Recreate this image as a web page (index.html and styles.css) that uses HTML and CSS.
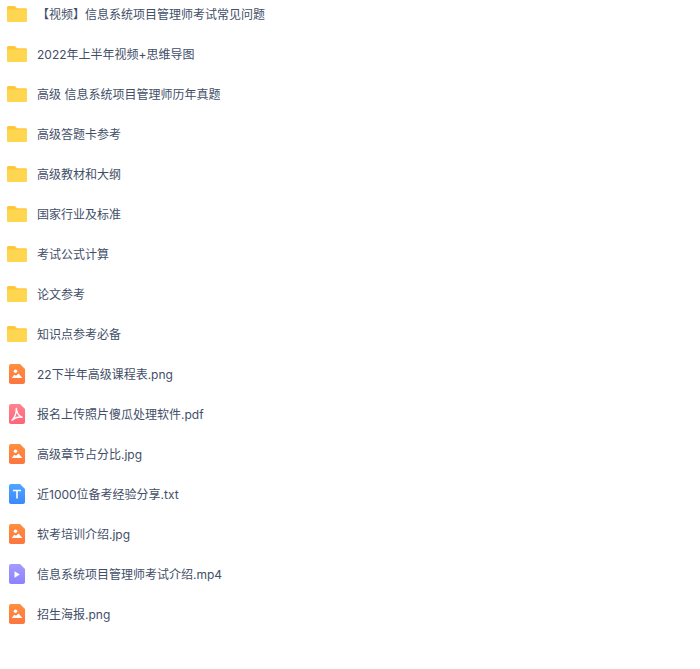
FILE: index.html
```html
<!DOCTYPE html>
<html lang="zh-CN">
<head>
<meta charset="utf-8">
<title>文件列表</title>
<link rel="stylesheet" href="styles.css">
</head>
<body>
<svg class="defs" width="0" height="0" aria-hidden="true">
  <defs>
    <linearGradient id="g-img" x1="0" y1="0" x2="0" y2="1"><stop offset="0" stop-color="#ff8f3f"/><stop offset="1" stop-color="#ff7540"/></linearGradient>
    <linearGradient id="g-pdf" x1="0" y1="0" x2="0" y2="1"><stop offset="0" stop-color="#ff8390"/><stop offset="1" stop-color="#ff6478"/></linearGradient>
    <linearGradient id="g-txt" x1="0" y1="0" x2="0" y2="1"><stop offset="0" stop-color="#4da6ff"/><stop offset="1" stop-color="#3d87ff"/></linearGradient>
    <linearGradient id="g-vid" x1="0" y1="0" x2="0" y2="1"><stop offset="0" stop-color="#a49bff"/><stop offset="1" stop-color="#8c82ff"/></linearGradient>
    <symbol id="folder" viewBox="0 0 20 16">
      <path d="M1.500 0H7c.8 0 1.400.3 2 1l1 1.200H18.500c.8 0 1.500.7 1.500 1.500V14.500c0 .8-.7 1.500-1.500 1.500H1.500C.7 16 0 15.300 0 14.500V1.500C0 .7.700 0 1.500 0z" fill="#ffc73a"/>
      <path d="M1.500 3.400H18.500c.8 0 1.500.6 1.500 1.400V14.500c0 .8-.7 1.500-1.500 1.500H1.500C.7 16 0 15.300 0 14.500V4.800c0-.8.700-1.400 1.500-1.400z" fill="#ffd64f"/>
    </symbol>
    <symbol id="img" viewBox="0 0 16 20">
      <path d="M2 0H11L16 5V18C16 19.100 15.100 20 14 20H2C.9 20 0 19.100 0 18V2C0 .9.900 0 2 0z" fill="url(#g-img)"/>
      <circle cx="6.500" cy="7.300" r="1.800" fill="#fff"/>
      <path d="M2.600 14 5.300 10.800 7 11.800 9.500 9.400 13.400 14z" fill="#fff"/>
    </symbol>
    <symbol id="pdf" viewBox="0 0 16 20">
      <path d="M2 0H11L16 5V18C16 19.100 15.100 20 14 20H2C.9 20 0 19.100 0 18V2C0 .9.900 0 2 0z" fill="url(#g-pdf)"/>
      <path d="M7.300 4.500C8 9 9.500 12 13 13.200 9.500 12.600 6 13.400 3 16.200 5.500 13.500 7.500 9 7.300 4.500z" fill="none" stroke="#fff" stroke-width="1.400" stroke-linejoin="round"/>
    </symbol>
    <symbol id="txt" viewBox="0 0 16 20">
      <path d="M2 0H11L16 5V18C16 19.100 15.100 20 14 20H2C.9 20 0 19.100 0 18V2C0 .9.900 0 2 0z" fill="url(#g-txt)"/>
      <path d="M4 5.800H12V7.300H8.800V14.500H7.200V7.300H4z" fill="#fff"/>
    </symbol>
    <symbol id="vid" viewBox="0 0 16 20">
      <path d="M2 0H11L16 5V18C16 19.100 15.100 20 14 20H2C.9 20 0 19.100 0 18V2C0 .9.900 0 2 0z" fill="url(#g-vid)"/>
      <path d="M5.500 7.200 10.800 10.500 5.500 13.800z" fill="#fff"/>
    </symbol>
  </defs>
</svg>
<ul class="list">
  <li class="row"><span class="slot"><svg class="ic-folder"><use href="#folder"/></svg></span><span class="name">【视频】信息系统项目管理师考试常见问题</span></li>
  <li class="row"><span class="slot"><svg class="ic-folder"><use href="#folder"/></svg></span><span class="name">2022年上半年视频+思维导图</span></li>
  <li class="row"><span class="slot"><svg class="ic-folder"><use href="#folder"/></svg></span><span class="name">高级 信息系统项目管理师历年真题</span></li>
  <li class="row"><span class="slot"><svg class="ic-folder"><use href="#folder"/></svg></span><span class="name">高级答题卡参考</span></li>
  <li class="row"><span class="slot"><svg class="ic-folder"><use href="#folder"/></svg></span><span class="name">高级教材和大纲</span></li>
  <li class="row"><span class="slot"><svg class="ic-folder"><use href="#folder"/></svg></span><span class="name">国家行业及标准</span></li>
  <li class="row"><span class="slot"><svg class="ic-folder"><use href="#folder"/></svg></span><span class="name">考试公式计算</span></li>
  <li class="row"><span class="slot"><svg class="ic-folder"><use href="#folder"/></svg></span><span class="name">论文参考</span></li>
  <li class="row"><span class="slot"><svg class="ic-folder"><use href="#folder"/></svg></span><span class="name">知识点参考必备</span></li>
  <li class="row"><span class="slot"><svg class="ic-file"><use href="#img"/></svg></span><span class="name">22下半年高级课程表.png</span></li>
  <li class="row"><span class="slot"><svg class="ic-file"><use href="#pdf"/></svg></span><span class="name">报名上传照片傻瓜处理软件.pdf</span></li>
  <li class="row"><span class="slot"><svg class="ic-file"><use href="#img"/></svg></span><span class="name">高级章节占分比.jpg</span></li>
  <li class="row"><span class="slot"><svg class="ic-file"><use href="#txt"/></svg></span><span class="name">近1000位备考经验分享.txt</span></li>
  <li class="row"><span class="slot"><svg class="ic-file"><use href="#img"/></svg></span><span class="name">软考培训介绍.jpg</span></li>
  <li class="row"><span class="slot"><svg class="ic-file"><use href="#vid"/></svg></span><span class="name">信息系统项目管理师考试介绍.mp4</span></li>
  <li class="row"><span class="slot"><svg class="ic-file"><use href="#img"/></svg></span><span class="name">招生海报.png</span></li>
</ul>
</body>
</html>
```

FILE: styles.css
```css
html, body {
  margin: 0;
  padding: 0;
  background: #fff;
}
.defs {
  position: absolute;
}
.list {
  display: grid;
  grid-auto-rows: 28px;
  row-gap: 12px;
  list-style: none;
  margin: 0;
  padding: 0 0 0 7px;
  font-family: Inter, "Noto Sans CJK SC", sans-serif;
  font-size: 12px;
  color: #424e67;
}
.row {
  display: flex;
  align-items: center;
}
.slot {
  display: flex;
  justify-content: center;
  width: 20px;
  margin-right: 10px;
}
.name {
  padding-bottom: 2px;
}
.ic-folder {
  width: 20px;
  height: 16px;
}
.ic-file {
  width: 16px;
  height: 20px;
}
```
